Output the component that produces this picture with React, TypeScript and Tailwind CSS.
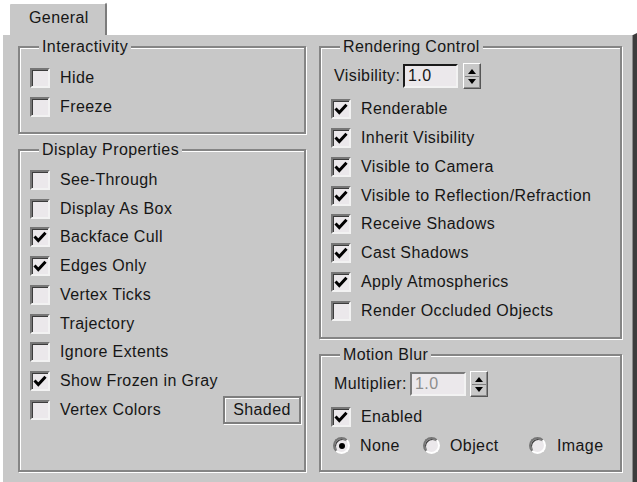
import React from "react";

function CheckBox({ checked = false }: { checked?: boolean }) {
  return (
    <span className="relative block h-[20px] w-[20px] shrink-0 border-2 border-t-[#767676] border-l-[#767676] border-b-[#f2f2f2] border-r-[#f2f2f2] bg-[#ebe8eb] shadow-[inset_1px_1px_0_#3c3c3c]">
      {checked && (
        <svg className="absolute left-0 top-0" width="16" height="16" viewBox="0 0 16 16">
          <path d="M2.5 7.5 L6.3 11.5 L13.5 3.8" fill="none" stroke="#000" strokeWidth="3" />
        </svg>
      )}
    </span>
  );
}

function Radio({ on = false }: { on?: boolean }) {
  return (
    <span className="flex h-[17px] w-[17px] shrink-0 items-center justify-center rounded-full border-2 border-t-[#767676] border-l-[#767676] border-b-white border-r-white bg-[#ebe8eb] shadow-[inset_1px_1px_0_#404040]">
      {on && <span className="h-[6px] w-[6px] rounded-full bg-black" />}
    </span>
  );
}

function Spinner() {
  return (
    <span className="flex h-[26px] w-[18px] shrink-0 flex-col border border-t-white border-l-white border-b-[#555] border-r-[#555] bg-[#c8c8c8] shadow-[inset_-1px_-1px_0_#8c8c8c]">
      <span className="flex flex-1 items-end justify-center pb-[2px]">
        <svg width="8" height="5" viewBox="0 0 8 5">
          <path d="M4 0 L8 5 L0 5Z" fill="#000" />
        </svg>
      </span>
      <span className="mx-[1px] h-[1px] bg-[#808080]" />
      <span className="flex flex-1 items-start justify-center pt-[2px]">
        <svg width="8" height="5" viewBox="0 0 8 5">
          <path d="M0 0 L8 0 L4 5Z" fill="#000" />
        </svg>
      </span>
    </span>
  );
}

function Field({ value, disabled = false }: { value: string; disabled?: boolean }) {
  return (
    <span
      className={
        disabled
          ? "flex h-[24px] w-[56px] shrink-0 items-center border-2 border-t-[#7a7a7a] border-l-[#7a7a7a] border-b-[#f2f2f2] border-r-[#f2f2f2] bg-[#ebe8eb] pl-[3px] text-[#8e8e8e]"
          : "flex h-[24px] w-[55px] shrink-0 items-center border-2 border-t-[#1a1a1a] border-l-[#1a1a1a] border-b-[#f2f2f2] border-r-[#f2f2f2] bg-[#ebe8eb] pl-[3px]"
      }
    >
      {value}
    </span>
  );
}

function Row({ label, checked, children }: { label: string; checked?: boolean; children?: React.ReactNode }) {
  return (
    <div className="flex h-[28.75px] items-center">
      <CheckBox checked={checked} />
      <span className="ml-[10px] flex-1 whitespace-nowrap">{label}</span>
      {children}
    </div>
  );
}

function Group({
  title,
  className,
  children,
}: {
  title: string;
  className: string;
  children: React.ReactNode;
}) {
  return (
    <fieldset
      className={
        "m-0 min-w-0 border-2 border-[#858585] shadow-[inset_1px_1px_0_#ffffff,1px_1px_0_#ffffff] " + className
      }
    >
      <legend className="ml-[9px] bg-[#c8c8c8] px-[3px] leading-[18px]">{title}</legend>
      {children}
    </fieldset>
  );
}

export default function App() {
  return (
    <div className="flex h-[482px] w-[637px] flex-col overflow-hidden bg-white font-['Liberation_Sans',Arial,sans-serif] text-[16px] tracking-[0.4px] text-[#161616]">
      <div className="flex h-[33px] shrink-0 items-end pl-[8px]">
        <div className="relative z-10 -mb-[2px] h-[33px] w-[99px] rounded-t-[3px] border-t-2 border-l-2 border-r-2 border-t-white border-l-white border-r-[#7c7c7c] bg-[#c8c8c8] pl-[19px] pt-[5px] leading-[18px]">
          General
        </div>
      </div>
      <div className="flex flex-1 gap-[13px] border-t-2 border-l-[3px] border-r-4 border-t-white border-l-white border-r-[#3c3c3c] bg-[#c8c8c8] pl-[15px] pt-[3px] pb-[10px] shadow-[inset_-1px_0_0_#8a8a8a]">
        <div className="flex w-[288px] flex-col gap-[7px]">
          <Group title="Interactivity" className="pl-[10px] pr-[3px] pt-[8px] pb-[10px]">
            <Row label="Hide" />
            <Row label="Freeze" />
          </Group>
          <Group title="Display Properties" className="flex-1 pl-[10px] pr-[3px] pt-[7px]">
            <Row label="See-Through" />
            <Row label="Display As Box" />
            <Row label="Backface Cull" checked />
            <Row label="Edges Only" checked />
            <Row label="Vertex Ticks" />
            <Row label="Trajectory" />
            <Row label="Ignore Extents" />
            <Row label="Show Frozen in Gray" checked />
            <Row label="Vertex Colors">
              <span className="flex h-[28px] w-[78px] items-center justify-center border-2 border-[#7e7e7e] shadow-[1px_1px_0_#fff,inset_1px_1px_0_#fff]">
                Shaded
              </span>
            </Row>
          </Group>
        </div>
        <div className="flex w-[303px] flex-col gap-[7px]">
          <Group title="Rendering Control" className="flex-1 pl-[10px] pr-[3px] pt-[7px]">
            <div className="mb-[6px] flex h-[26px] items-center pl-[3px]">
              <span className="w-[69px] whitespace-nowrap">Visibility:</span>
              <Field value="1.0" />
              <span className="ml-[5px]">
                <Spinner />
              </span>
            </div>
            <Row label="Renderable" checked />
            <Row label="Inherit Visibility" checked />
            <Row label="Visible to Camera" checked />
            <Row label="Visible to Reflection/Refraction" checked />
            <Row label="Receive Shadows" checked />
            <Row label="Cast Shadows" checked />
            <Row label="Apply Atmospherics" checked />
            <Row label="Render Occluded Objects" />
          </Group>
          <Group title="Motion Blur" className="pl-[10px] pr-[3px] pt-[7px] pb-[10px]">
            <div className="mb-[5px] flex h-[26px] items-center pl-[3px]">
              <span className="w-[76px] whitespace-nowrap">Multiplier:</span>
              <Field value="1.0" disabled />
              <span className="ml-[4px]">
                <Spinner />
              </span>
            </div>
            <div className="flex h-[29px] items-center">
              <CheckBox checked />
              <span className="ml-[10px]">Enabled</span>
            </div>
            <div className="flex h-[29px] items-center pl-[2px]">
              <div className="flex w-[90px] items-center">
                <Radio on />
                <span className="ml-[10px]">None</span>
              </div>
              <div className="flex w-[106px] items-center">
                <Radio />
                <span className="ml-[10px]">Object</span>
              </div>
              <div className="flex items-center">
                <Radio />
                <span className="ml-[11px]">Image</span>
              </div>
            </div>
          </Group>
        </div>
      </div>
    </div>
  );
}
